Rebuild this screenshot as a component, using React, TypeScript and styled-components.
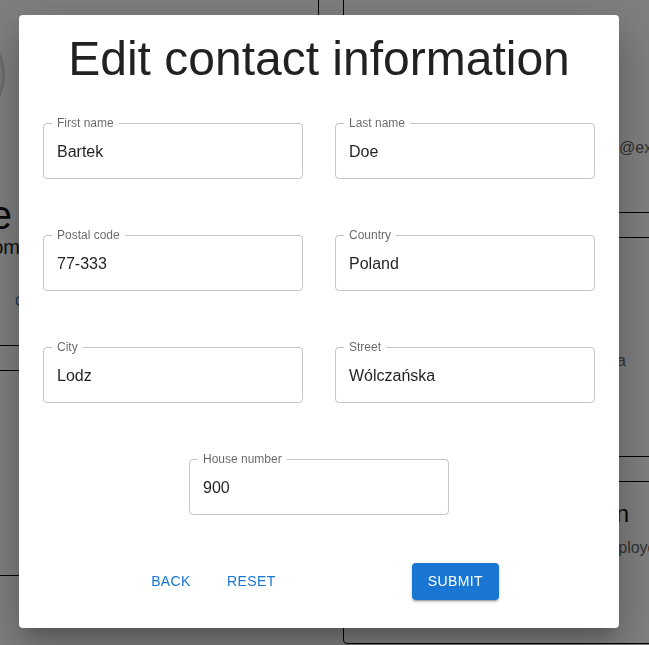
import styled, { createGlobalStyle } from "styled-components";

const GlobalStyle = createGlobalStyle`
  html, body {
    margin: 0;
    background: #fff;
    overflow: hidden;
    font-family: "Liberation Sans", Arial, sans-serif;
  }
`;

const fields = [
  { label: "First name", value: "Bartek" },
  { label: "Last name", value: "Doe" },
  { label: "Postal code", value: "77-333" },
  { label: "Country", value: "Poland" },
  { label: "City", value: "Lodz" },
  { label: "Street", value: "Wólczańska" },
];

const App = () => {
  return (
    <>
      <GlobalStyle />
      <Page>
        <Column>
          <Card $height={406} $align="flex-end">
            <Avatar />
            <Name>Bartek Doe</Name>
            <Email>bartek.doe@example.com</Email>
            <LinkButton>Change photo</LinkButton>
          </Card>
          <Card $height={206} />
        </Column>
        <Column>
          <Card $height={273} $justify="flex-end" $pb={52}>
            <Detail>
              <Aligned $width={275} $align="right">bartek.doe</Aligned>@example.com
            </Detail>
          </Card>
          <Card $height={220} $pt={111}>
            <Detail>
              <Aligned $width={282} $align="right">Wólczańska</Aligned>
            </Detail>
          </Card>
          <Card $height={163} $pt={16}>
            <Heading>
              <Aligned $width={285} $align="right">Position</Aligned>
            </Heading>
            <Detail>
              <Aligned $width={252} />employee of the month
            </Detail>
          </Card>
        </Column>
      </Page>

      <Backdrop>
        <Dialog>
          <Title>Edit contact information</Title>
          <FieldGrid>
            {fields.map((f) => (
              <Field key={f.label}>
                <Legend>{f.label}</Legend>
                <Input defaultValue={f.value} />
              </Field>
            ))}
            <Field $centered>
              <Legend>House number</Legend>
              <Input defaultValue="900" />
            </Field>
          </FieldGrid>
          <Footer>
            <TextButton>Back</TextButton>
            <TextButton>Reset</TextButton>
            <SubmitButton>Submit</SubmitButton>
          </Footer>
        </Dialog>
      </Backdrop>
    </>
  );
};

// page behind the dialog (scrolled, only edges visible)
const Page = styled.div`
  display: grid;
  grid-template-columns: 601px 601px;
  column-gap: 24px;
  margin: -60px 0 0 -282px;
`;

const Column = styled.div`
  display: flex;
  flex-direction: column;
  gap: 24px;
`;

const Card = styled.div<{
  $height: number;
  $align?: string;
  $justify?: string;
  $pt?: number;
  $pb?: number;
}>`
  box-sizing: border-box;
  height: ${(p) => p.$height}px;
  border: 1px solid #000;
  border-radius: 4px;
  display: flex;
  flex-direction: column;
  align-items: ${(p) => p.$align ?? "stretch"};
  justify-content: ${(p) => p.$justify ?? "flex-start"};
  padding-top: ${(p) => p.$pt ?? 0}px;
  padding-bottom: ${(p) => p.$pb ?? 0}px;
`;

const Avatar = styled.div`
  box-sizing: border-box;
  width: 100px;
  height: 100px;
  margin: 84px 313px 0 0;
  border-radius: 50%;
  border: 3px solid #d8d8d8;
  background: #f4f4f4;
`;

const Name = styled.div`
  margin: 70px 306px 0 0;
  font-size: 40px;
  line-height: 40px;
  color: #111;
`;

const Email = styled.div`
  margin: 0 298px 0 0;
  font-size: 20px;
  line-height: 24px;
  color: #222;
`;

const LinkButton = styled.div`
  width: 120px;
  margin: 30px 183px 0 0;
  font-size: 14px;
  line-height: 24px;
  letter-spacing: 0.4px;
  text-transform: uppercase;
  color: #1976d2;
`;

const Detail = styled.div`
  font-size: 16px;
  line-height: 24px;
  color: #666;
  white-space: nowrap;
`;

const Heading = styled.div`
  font-size: 24px;
  line-height: 32px;
  color: #111;
  white-space: nowrap;
  margin-bottom: 6px;
`;

const Aligned = styled.span<{ $width: number; $align?: string }>`
  display: inline-block;
  width: ${(p) => p.$width}px;
  text-align: ${(p) => p.$align ?? "left"};
`;

// dialog
const Backdrop = styled.div`
  position: fixed;
  inset: 0;
  background: rgba(0, 0, 0, 0.5);
  display: flex;
  align-items: flex-start;
  padding: 15px 0 0 19px;
`;

const Dialog = styled.div`
  box-sizing: border-box;
  width: 600px;
  background: #fff;
  border-radius: 4px;
  padding: 16px 24px 28px;
  box-shadow: 0px 11px 15px -7px rgba(0, 0, 0, 0.2),
    0px 24px 38px 3px rgba(0, 0, 0, 0.14), 0px 9px 46px 8px rgba(0, 0, 0, 0.12);
`;

const Title = styled.h3`
  margin: 0;
  font-size: 48px;
  font-weight: 400;
  line-height: 56px;
  text-align: center;
  color: rgba(0, 0, 0, 0.87);
`;

const FieldGrid = styled.div`
  display: grid;
  grid-template-columns: 1fr 1fr;
  column-gap: 32px;
  row-gap: 50px;
  margin-top: 30px;
`;

const Field = styled.fieldset<{ $centered?: boolean }>`
  box-sizing: border-box;
  height: 62px;
  min-width: 0;
  margin: 0;
  padding: 0 8px;
  border: 1px solid rgba(0, 0, 0, 0.23);
  border-radius: 4px;
  ${(p) =>
    p.$centered &&
    `
    grid-column: 1 / -1;
    justify-self: center;
    width: 260px;
  `}
`;

const Legend = styled.legend`
  padding: 0 5px;
  font-size: 12px;
  line-height: 12px;
  color: rgba(0, 0, 0, 0.6);
`;

const Input = styled.input`
  display: block;
  box-sizing: border-box;
  width: 100%;
  margin: 0;
  padding: 13px 5px 17px;
  border: 0;
  outline: 0;
  background: transparent;
  font-family: "Liberation Sans", Arial, sans-serif;
  font-size: 16px;
  line-height: 19px;
  height: 49px;
  color: rgba(0, 0, 0, 0.87);
`;

const Footer = styled.div`
  display: flex;
  align-items: center;
  margin-top: 48px;
  padding-left: 96px;
`;

const TextButton = styled.button`
  min-width: 64px;
  margin-right: 16px;
  padding: 6px 8px;
  border: 0;
  border-radius: 4px;
  background: transparent;
  font-family: "Liberation Sans", Arial, sans-serif;
  font-size: 14px;
  font-weight: 400;
  line-height: 24.5px;
  letter-spacing: 0.4px;
  text-transform: uppercase;
  color: #1976d2;
`;

const SubmitButton = styled(TextButton)`
  margin: 0 0 0 112px;
  padding: 6px 16px;
  background: #1976d2;
  color: #fff;
  box-shadow: 0px 3px 1px -2px rgba(0, 0, 0, 0.2),
    0px 2px 2px 0px rgba(0, 0, 0, 0.14), 0px 1px 5px 0px rgba(0, 0, 0, 0.12);
`;

export default App;
